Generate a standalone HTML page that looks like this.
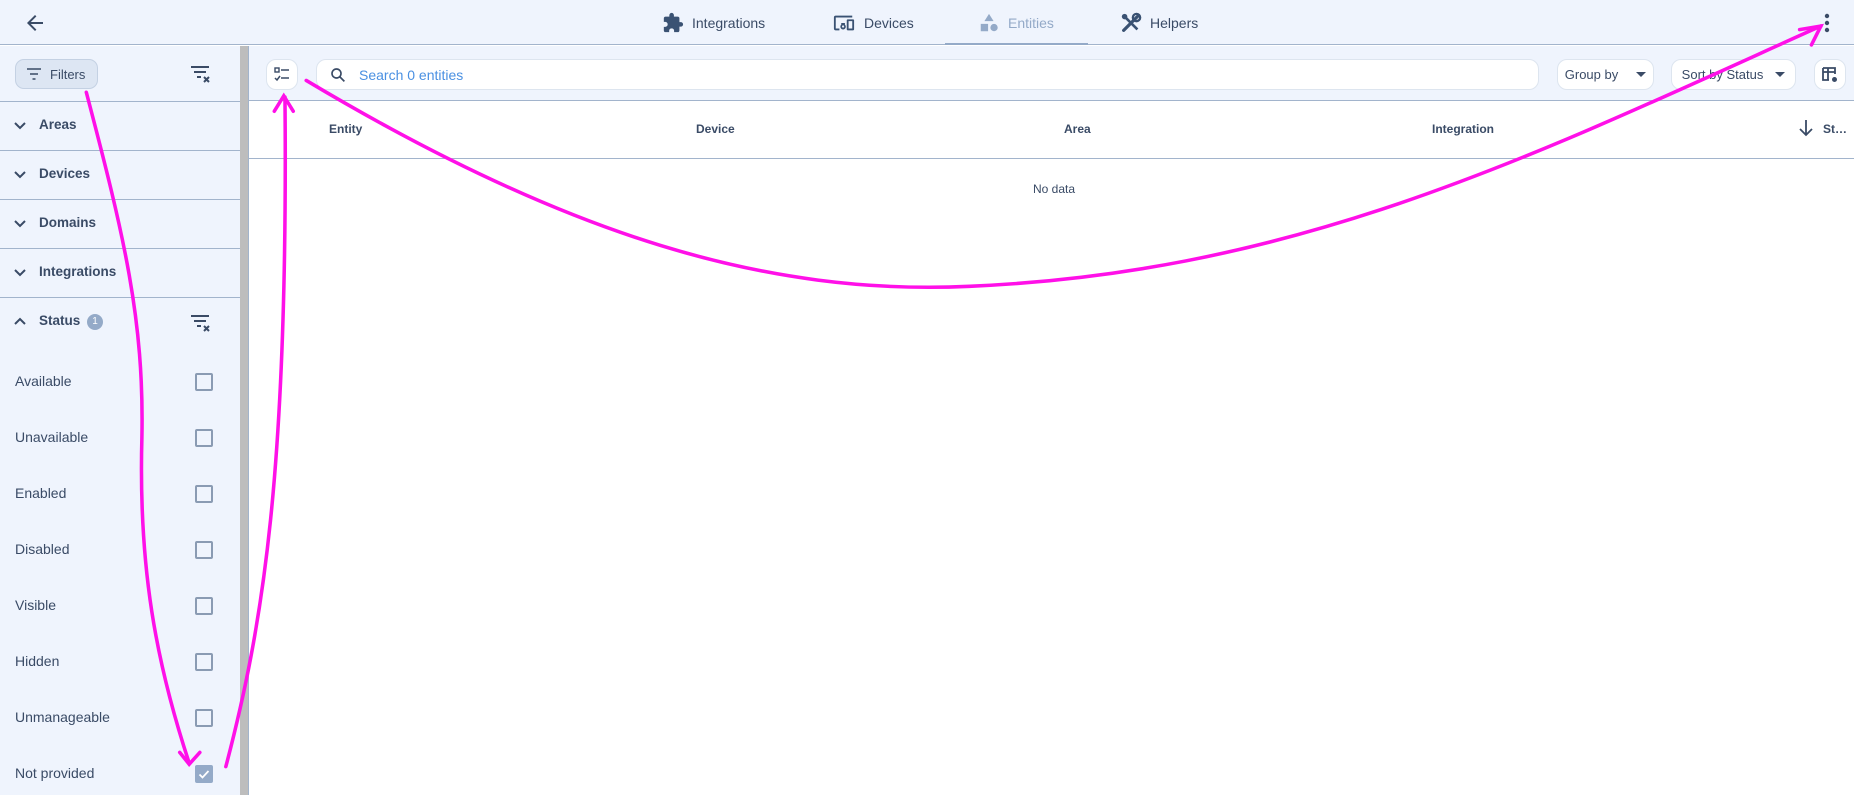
<!DOCTYPE html>
<html><head><meta charset="utf-8"><style>
*{box-sizing:border-box;margin:0;padding:0}
body{width:1854px;height:795px;overflow:hidden;background:#fff;font-family:"Liberation Sans",Arial,sans-serif;color:#3a4b66;position:relative}
.abs{position:absolute;white-space:nowrap}
.hdr{left:0;top:0;width:1854px;height:45px;background:#eff4fd;border-bottom:1px solid #a2b4cc}
.tab{top:12px;font-size:14px;color:#3a4b66;display:flex;align-items:center;gap:8px}
.side{left:0;top:46px;width:240px;height:749px;background:#eff4fd}
.scroll{left:240px;top:46px;width:8px;height:749px;background:#bdbdbd}
.sideb{left:248px;top:46px;width:1px;height:749px;background:#a2b4cc}
.sep{left:0;width:240px;height:1px;background:#a2b4cc}
.lbl{font-size:13.5px;font-weight:bold;color:#3a4b66}
.item{left:15px;font-size:14px;color:#3a4b66}
.cb{left:195px;width:18px;height:18px;border:2px solid #8a9bb3;border-radius:2px}
.tool{left:249px;top:46px;width:1605px;height:55px;background:#eff4fd;border-bottom:1px solid #a2b4cc}
.btn{top:59px;height:31px;background:#fff;border:1px solid #dde5ef;border-radius:10px;font-size:13px;color:#3a4b66;display:flex;align-items:center}
.col{top:122px;font-size:12px;font-weight:bold;color:#3a4b66}
</style></head><body>
<div class="abs hdr"></div>
<svg class="abs" style="left:23px;top:11px" width="24" height="24" viewBox="0 0 24 24"><path d="M20 11H7.8l5.6-5.6L12 4l-8 8 8 8 1.4-1.4L7.8 13H20z" fill="#3a4b66"/></svg>
<div class="abs tab" style="left:662px"><svg width="22" height="22" viewBox="0 0 24 24"><path fill="#3a5273" d="M20.5 11H19V7a2 2 0 0 0-2-2h-4V3.5a2.5 2.5 0 0 0-5 0V5H4a2 2 0 0 0-2 2v3.8h1.5a2.7 2.7 0 0 1 0 5.4H2V20a2 2 0 0 0 2 2h3.8v-1.5a2.7 2.7 0 0 1 5.4 0V22H17a2 2 0 0 0 2-2v-4h1.5a2.5 2.5 0 0 0 0-5z"/></svg>Integrations</div>
<div class="abs tab" style="left:832px"><svg width="24" height="22" viewBox="0 0 24 24"><path fill="#3a5273" d="M3 6h18V4H3a2 2 0 0 0-2 2v12a2 2 0 0 0 2 2h4v-2H3zm10 6H9v1.8a3 3 0 1 0 4 0zm-2 5a1.2 1.2 0 1 1 0-2.4 1.2 1.2 0 0 1 0 2.4zM22 8h-6a1 1 0 0 0-1 1v10a1 1 0 0 0 1 1h6a1 1 0 0 0 1-1V9a1 1 0 0 0-1-1zm-1 10h-4v-8h4z"/></svg>Devices</div>
<div class="abs tab" style="left:978px;color:#94aac8"><svg width="22" height="22" viewBox="0 0 24 24"><path fill="#94aac8" d="M12 2l5 8H7zM3 13h8v8H3zm14.5 0a4 4 0 1 1 0 8 4 4 0 0 1 0-8z"/></svg>Entities</div>
<div class="abs" style="left:945px;top:43px;width:143px;height:2px;background:#94aac8"></div>
<div class="abs tab" style="left:1120px"><svg width="22" height="22" viewBox="0 0 24 24"><path d="M4 20L20 4" stroke="#3a5273" stroke-width="3.5" stroke-linecap="round"/><path d="M6 4l14 14-2 2L4 6z" fill="#3a5273"/><circle cx="5" cy="5" r="3" fill="#3a5273"/><circle cx="18" cy="6" r="4" fill="none" stroke="#3a5273" stroke-width="2.5"/></svg>Helpers</div>
<svg class="abs" style="left:1820px;top:11px" width="14" height="24" viewBox="0 0 14 24"><circle cx="7" cy="5" r="2.2" fill="#3a4b66"/><circle cx="7" cy="12" r="2.2" fill="#3a4b66"/><circle cx="7" cy="19" r="2.2" fill="#3a4b66"/></svg>

<div class="abs side"></div>
<div class="abs scroll"></div>
<div class="abs sideb"></div>
<div class="abs" style="left:15px;top:59px;width:83px;height:30px;background:#dde6f3;border:1px solid #c4d1e3;border-radius:9px;font-size:13px;display:flex;align-items:center;padding-left:10px;gap:8px"><svg width="16" height="12" viewBox="0 0 16 12"><path d="M1 1h14M4 6h8M6.5 11h3" stroke="#3a4b66" stroke-width="1.6"/></svg>Filters</div>
<svg class="abs" style="left:190px;top:64px" width="22" height="22" viewBox="0 0 22 22"><path d="M1 3h18M4 8h12M7 13h4" stroke="#3a4b66" stroke-width="2"/><path d="M14 13l5 5M19 13l-5 5" stroke="#3a4b66" stroke-width="2"/></svg>
<div class="abs sep" style="top:101px"></div>
<div class="abs sep" style="top:150px"></div>
<div class="abs sep" style="top:199px"></div>
<div class="abs sep" style="top:248px"></div>
<div class="abs sep" style="top:297px"></div>
<svg class="abs" style="left:12px;top:118px" width="16" height="16" viewBox="0 0 16 16"><path d="M3 5l5 5 5-5" stroke="#3a4b66" stroke-width="2" fill="none"/></svg>
<div class="abs lbl" style="left:39px;top:117px">Areas</div>
<svg class="abs" style="left:12px;top:167px" width="16" height="16" viewBox="0 0 16 16"><path d="M3 5l5 5 5-5" stroke="#3a4b66" stroke-width="2" fill="none"/></svg>
<div class="abs lbl" style="left:39px;top:166px">Devices</div>
<svg class="abs" style="left:12px;top:216px" width="16" height="16" viewBox="0 0 16 16"><path d="M3 5l5 5 5-5" stroke="#3a4b66" stroke-width="2" fill="none"/></svg>
<div class="abs lbl" style="left:39px;top:215px">Domains</div>
<svg class="abs" style="left:12px;top:265px" width="16" height="16" viewBox="0 0 16 16"><path d="M3 5l5 5 5-5" stroke="#3a4b66" stroke-width="2" fill="none"/></svg>
<div class="abs lbl" style="left:39px;top:264px">Integrations</div>
<svg class="abs" style="left:12px;top:313px" width="16" height="16" viewBox="0 0 16 16"><path d="M3 11l5-5 5 5" stroke="#3a4b66" stroke-width="2" fill="none"/></svg>
<div class="abs lbl" style="left:39px;top:313px">Status</div>
<div class="abs" style="left:87px;top:314px;width:16px;height:16px;border-radius:8px;background:#94aac8;color:#fff;font-size:10px;text-align:center;line-height:16px">1</div>
<svg class="abs" style="left:190px;top:313px" width="22" height="22" viewBox="0 0 22 22"><path d="M1 3h18M4 8h12M7 13h4" stroke="#3a4b66" stroke-width="2"/><path d="M14 13l5 5M19 13l-5 5" stroke="#3a4b66" stroke-width="2"/></svg>

<div class="abs item" style="top:373px">Available</div><div class="abs cb" style="top:373px"></div>
<div class="abs item" style="top:429px">Unavailable</div><div class="abs cb" style="top:429px"></div>
<div class="abs item" style="top:485px">Enabled</div><div class="abs cb" style="top:485px"></div>
<div class="abs item" style="top:541px">Disabled</div><div class="abs cb" style="top:541px"></div>
<div class="abs item" style="top:597px">Visible</div><div class="abs cb" style="top:597px"></div>
<div class="abs item" style="top:653px">Hidden</div><div class="abs cb" style="top:653px"></div>
<div class="abs item" style="top:709px">Unmanageable</div><div class="abs cb" style="top:709px"></div>
<div class="abs item" style="top:765px">Not provided</div>
<div class="abs cb" style="top:765px;background:#94aac8;border-color:#94aac8"><svg width="14" height="14" viewBox="0 0 14 14" style="display:block"><path d="M2.5 7.5l3 3 6-6.5" stroke="#fff" stroke-width="1.8" fill="none"/></svg></div>

<div class="abs tool"></div>
<div class="abs btn" style="left:266px;width:32px;justify-content:center"><svg width="18" height="18" viewBox="0 0 18 18"><rect x="2" y="2" width="4" height="4" fill="none" stroke="#3a4b66" stroke-width="1.4"/><path d="M8 4h8M8 12h8M2 12l2 2 3-4" stroke="#3a4b66" stroke-width="1.5" fill="none"/></svg></div>
<div class="abs btn" style="left:316px;width:1223px;padding-left:12px;gap:12px;font-size:14px;color:#4a90e2"><svg width="18" height="18" viewBox="0 0 24 24"><circle cx="10" cy="10" r="6" stroke="#3a4b66" stroke-width="2.2" fill="none"/><path d="M14.5 14.5l6 6" stroke="#3a4b66" stroke-width="2.2"/></svg>Search 0 entities</div>
<div class="abs btn" style="left:1557px;width:97px;justify-content:center">Group by<svg style="margin-left:18px" width="10" height="6"><path d="M0 0h10L5 5z" fill="#3a4b66"/></svg></div>
<div class="abs btn" style="left:1671px;width:125px;justify-content:center">Sort by Status<svg style="margin-left:12px" width="10" height="6"><path d="M0 0h10L5 5z" fill="#3a4b66"/></svg></div>
<div class="abs btn" style="left:1814px;width:32px;justify-content:center"><svg width="18" height="18" viewBox="0 0 18 18"><path d="M2 2h12v6M2 2v12h6M2 6h12M7 2v12" stroke="#3a4b66" stroke-width="1.8" fill="none"/><circle cx="13.5" cy="13.5" r="2.5" fill="#3a4b66"/></svg></div>

<div class="abs col" style="left:329px">Entity</div>
<div class="abs col" style="left:696px">Device</div>
<div class="abs col" style="left:1064px">Area</div>
<div class="abs col" style="left:1432px">Integration</div>
<svg class="abs" style="left:1797px;top:119px" width="18" height="18" viewBox="0 0 18 18"><path d="M9 1v15M3 10l6 6 6-6" stroke="#3a4b66" stroke-width="1.8" fill="none"/></svg>
<div class="abs col" style="left:1823px">St…</div>
<div class="abs" style="left:249px;top:158px;width:1605px;height:1px;background:#a2b4cc"></div>
<div class="abs" style="left:1033px;top:182px;font-size:12px;color:#3a4b66">No data</div>

<svg class="abs" style="left:0;top:0" width="1854" height="795" viewBox="0 0 1568 672" preserveAspectRatio="none">
<g stroke="#ff10e8" stroke-width="3" fill="none" stroke-linecap="round">
<path d="M73,78 C105,200 122,270 120,370 C117,480 132,560 160,645"/>
<path d="M152,636 L160,646 L169,636"/>
<path d="M191,648 C222,530 244,400 241,82"/>
<path d="M232,94 L240,81 L248,94"/>
<path d="M259,68 C480,200 650,250 820,242 C1100,230 1300,130 1540,22"/>
<path d="M1522,25 L1540,22 L1532,38"/>
</g></svg>
</body></html>
